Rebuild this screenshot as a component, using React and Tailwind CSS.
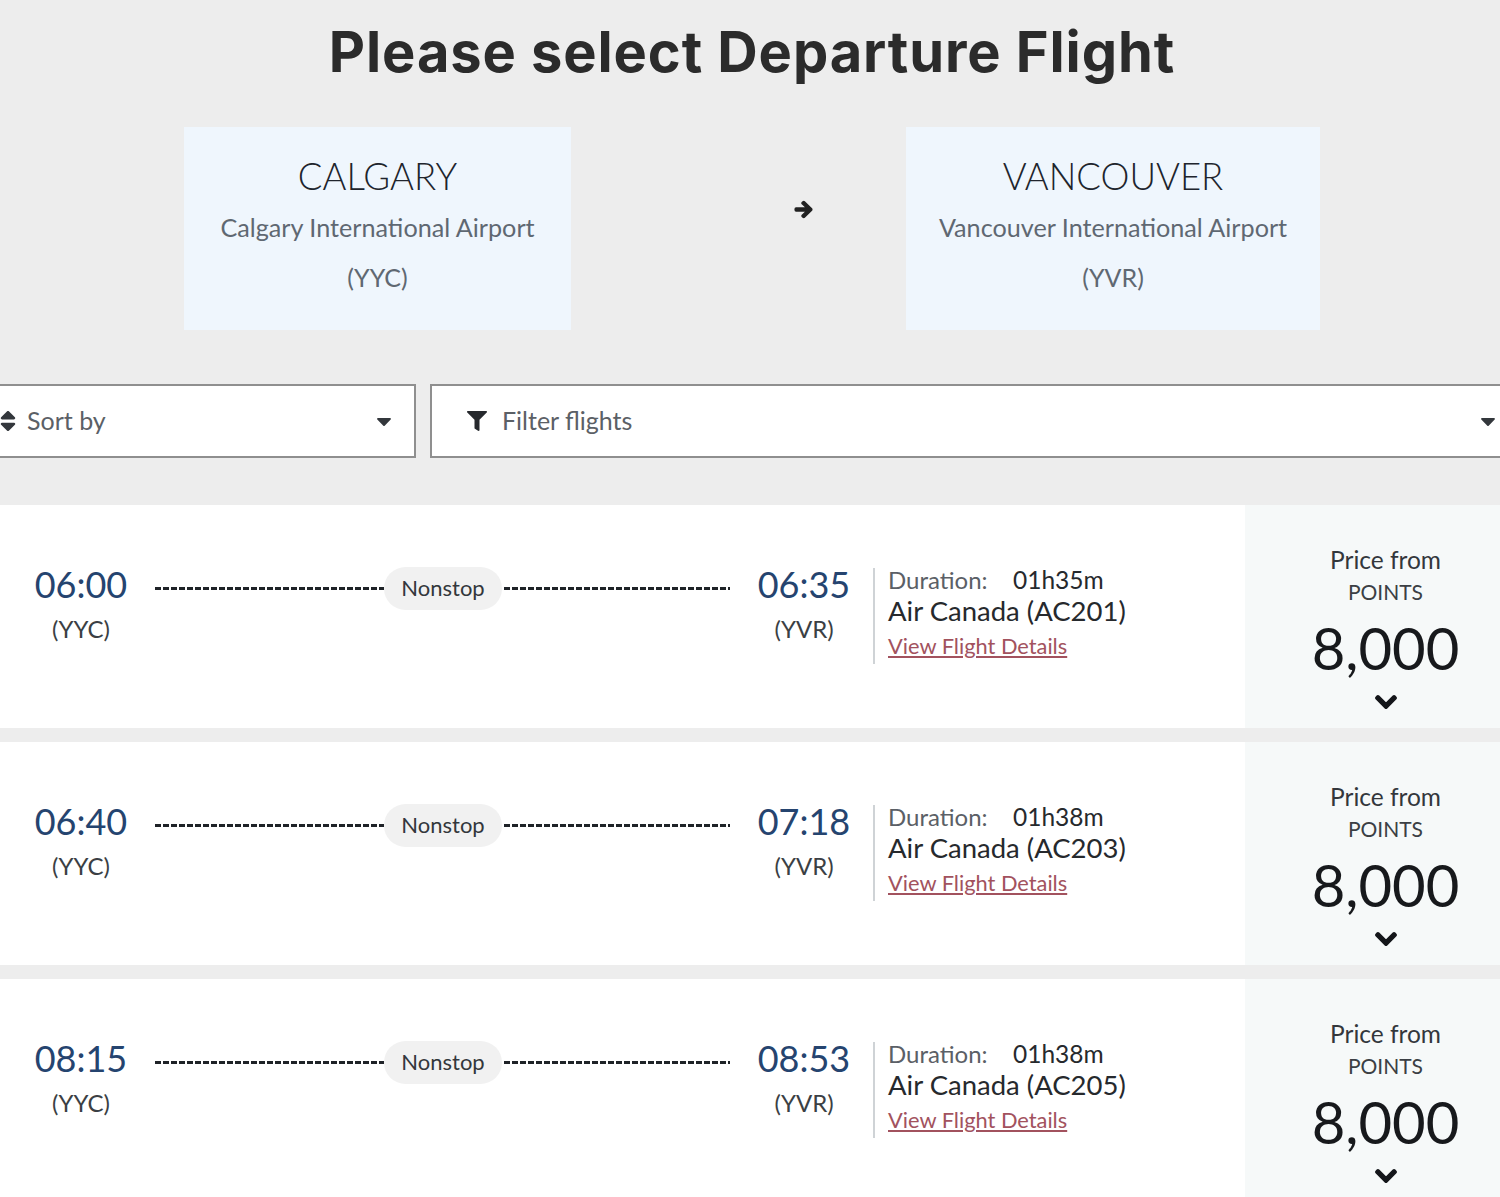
import { FaSort, FaFilter, FaCaretDown, FaArrowRight, FaChevronDown } from 'react-icons/fa';

const flights = [
  { dep: '06:00', arr: '06:35', duration: '01h35m', flight: 'Air Canada (AC201)' },
  { dep: '06:40', arr: '07:18', duration: '01h38m', flight: 'Air Canada (AC203)' },
  { dep: '08:15', arr: '08:53', duration: '01h38m', flight: 'Air Canada (AC205)' },
];

const dashClass =
  'h-[3px] bg-[repeating-linear-gradient(90deg,#1f2328_0,#1f2328_6px,transparent_6px,transparent_8px)]';

function AirportCard({ city, airport, code, width }) {
  return (
    <div className={`${width} h-[203px] bg-[#eff6fd] pt-[27px] text-center`}>
      <div className="text-[36.5px] leading-[44px] font-light text-[#20242c]">{city}</div>
      <div className="mt-[14px] text-[25.2px] leading-[30px] text-[#5f6872]">{airport}</div>
      <div className="mt-[20px] text-[25px] leading-[30px] text-[#5f6872]">{code}</div>
    </div>
  );
}

function TimeColumn({ time, code }) {
  return (
    <div className="w-[110px] shrink-0 text-center">
      <div className="text-[36px] leading-[44px] text-[#25446f]">{time}</div>
      <div className="mt-[8px] text-[24px] leading-[30px] text-[#3b3f44]">{code}</div>
    </div>
  );
}

function FlightRow({ flight }) {
  return (
    <div className="flex h-[223px] bg-white mb-[14px]">
      <div className="flex flex-1 items-start pt-[57px] pl-[26px]">
        <TimeColumn time={flight.dep} code="(YYC)" />
        <div className="ml-[19px] mt-[5px] flex items-center w-[577px] shrink-0">
          <div className={`${dashClass} w-[229px]`} />
          <div className="w-[118px] h-[43px] pb-[2px] rounded-[22px] bg-[#f1f1f1] flex items-center justify-center text-[22px] text-[#33373c]">
            Nonstop
          </div>
          <div className={`${dashClass} ml-[2px] w-[226px]`} />
        </div>
        <div className="ml-[17px]">
          <TimeColumn time={flight.arr} code="(YVR)" />
        </div>
        <div className="ml-[14px] mt-[6px] w-[2px] h-[96px] bg-[#cfd3d6]" />
        <div className="ml-[13px] mt-[2px]">
          <div className="flex text-[24px] leading-[32px]">
            <span className="w-[125px] text-[#5b6066]">Duration:</span>
            <span className="text-[24.5px] text-[#26292d]">{flight.duration}</span>
          </div>
          <div className="text-[27.5px] leading-[30px] text-[#26292d]">{flight.flight}</div>
          <div className="mt-[5px] text-[21.8px] leading-[30px] text-[#a2525e] underline underline-offset-2">
            View Flight Details
          </div>
        </div>
      </div>
      <div className="w-[255px] shrink-0 bg-[#f6f9f9] pl-[26px] pt-[38px] text-center">
        <div className="text-[24.5px] leading-[34px] text-[#33373c]">Price from</div>
        <div className="mt-[-2px] text-[21px] leading-[34px] text-[#3b3f44]">POINTS</div>
        <div className="mt-[7px] text-[58px] leading-[64px] text-[#17191c]">8,000</div>
        <div className="flex justify-center mt-[10px] text-[#14161a] text-[24px]">
          <FaChevronDown className="stroke-current stroke-[30]" />
        </div>
      </div>
    </div>
  );
}

export default function App() {
  return (
    <div className="w-[1500px] h-[1197px] overflow-hidden bg-[#ededed] font-['Lato','Liberation_Sans',sans-serif]">
      <h1 className="pt-[19px] pl-[4px] text-center text-[56px] leading-[66px] font-bold tracking-[0.9px] text-[#2b2b2b] font-['Inter','Liberation_Sans',sans-serif]">
        Please select Departure Flight
      </h1>

      <div className="mt-[42px] flex items-center pl-[184px]">
        <AirportCard city="CALGARY" airport="Calgary International Airport" code="(YYC)" width="w-[387px]" />
        <div className="w-[335px] flex justify-center pl-[130px] pb-[38px] text-[#222] text-[19px]">
          <FaArrowRight className="stroke-current stroke-[40]" />
        </div>
        <AirportCard city="VANCOUVER" airport="Vancouver International Airport" code="(YVR)" width="w-[414px]" />
      </div>

      <div className="mt-[54px] flex gap-[14px] h-[74px]">
        <div className="w-[416px] shrink-0 flex items-center bg-white border-2 border-l-0 border-[#8f8f8f] pr-[18px]">
          <FaSort className="text-[#33373c] text-[26px] ml-[-5px]" />
          <span className="ml-[6px] text-[25px] text-[#5b6066]">Sort by</span>
          <FaCaretDown className="ml-auto text-[#33373c] text-[24px]" />
        </div>
        <div className="flex-1 flex items-center bg-white border-2 border-r-0 border-[#8f8f8f] pl-[35px]">
          <FaFilter className="text-[#26292d] text-[20px]" />
          <span className="ml-[15px] text-[25px] text-[#5b6066]">Filter flights</span>
          <FaCaretDown className="ml-auto text-[#33373c] text-[24px]" />
        </div>
      </div>

      <div className="mt-[47px]">
        {flights.map((f) => (
          <FlightRow key={f.dep} flight={f} />
        ))}
      </div>
    </div>
  );
}
